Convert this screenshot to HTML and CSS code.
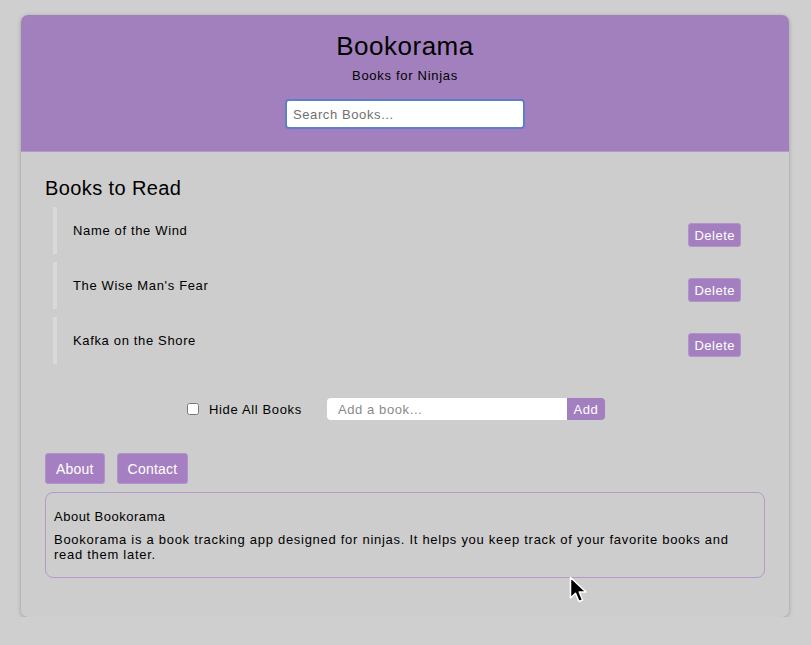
FILE: index.html
```html
<!DOCTYPE html>
<html lang="en">
<head>
<meta charset="utf-8">
<title>Bookorama</title>
<link rel="stylesheet" href="styles.css">
</head>
<body>
<div class="app">
  <header class="header">
    <h1 class="title">Bookorama</h1>
    <p class="tagline">Books for Ninjas</p>
    <input class="search" type="text" placeholder="Search Books...">
  </header>
  <main class="main">
    <h2 class="section-title">Books to Read</h2>
    <ul class="book-list">
      <li class="book"><span class="book-name">Name of the Wind</span><button class="delete">Delete</button></li>
      <li class="book"><span class="book-name">The Wise Man's Fear</span><button class="delete">Delete</button></li>
      <li class="book"><span class="book-name">Kafka on the Shore</span><button class="delete">Delete</button></li>
    </ul>
    <div class="controls">
      <input class="hide-check" type="checkbox" id="hide">
      <label class="hide-label" for="hide">Hide All Books</label>
      <input class="add-input" type="text" placeholder="Add a book...">
      <button class="add-btn">Add</button>
    </div>
    <nav class="tabs">
      <button class="tab">About</button>
      <button class="tab">Contact</button>
    </nav>
    <section class="about">
      <h3 class="about-title">About Bookorama</h3>
      <p class="about-text">Bookorama is a book tracking app designed for ninjas. It helps you keep track of your favorite books and read them later.</p>
    </section>
  </main>
</div>
<svg class="cursor" width="20" height="30" viewBox="0 0 20 30">
  <path d="M1.5 1.5 L1.5 22 L6.5 17.2 L10 25.5 L13.6 24 L10.2 16 L17 16 Z" fill="#000" stroke="#fff" stroke-width="1.5" stroke-linejoin="round"/>
</svg>
</body>
</html>
```

FILE: styles.css
```css
body {
  margin: 0;
  background: #cfcfcf;
  font-family: "Liberation Sans", Arial, sans-serif;
  color: #000;
}

.app {
  width: 768px;
  margin: 15px 0 0 21px;
  background: #cdcdcd;
  border-radius: 7px;
  box-shadow: 0 1px 4px rgba(0, 0, 0, 0.25);
  overflow: hidden;
  padding-bottom: 39px;
}

.header {
  background: #a280bd;
  text-align: center;
  padding: 16px 0 22px;
  border-bottom: 1px solid #b596cf;
}

.title {
  margin: 0;
  font-size: 26px;
  line-height: 30px;
  font-weight: normal;
  letter-spacing: 0.5px;
}

.tagline {
  margin: 7px 0 15px;
  font-size: 13px;
  line-height: 16px;
  letter-spacing: 0.7px;
}

.search {
  display: block;
  margin: 0 auto;
  width: 240px;
  height: 30px;
  box-sizing: border-box;
  border: 2px solid #5b7fc8;
  border-radius: 4px;
  padding: 0 6px;
  font-family: inherit;
  font-size: 13px;
  letter-spacing: 0.6px;
  background: #fff;
  outline: none;
}

.search::placeholder { color: #707070; }

.main {
  padding: 24px 24px 0;
}

.section-title {
  margin: 0 0 7px;
  font-size: 20px;
  line-height: 24px;
  font-weight: normal;
  letter-spacing: 0.4px;
}

.book-list {
  list-style: none;
  margin: 0 0 0 8px;
  padding: 0;
  display: flex;
  flex-direction: column;
  gap: 8px;
}

.book {
  display: flex;
  justify-content: space-between;
  align-items: flex-start;
  border-left: 4px solid #d9d9d9;
  padding: 16px 24px 7px 16px;
}

.book-name {
  font-size: 13px;
  line-height: 15px;
  letter-spacing: 0.65px;
}

.delete {
  height: 24px;
  padding: 0 5px;
  border: 1px solid #b293cc;
  border-radius: 3px;
  background: #a37fc0;
  color: #fff;
  font-family: inherit;
  font-size: 13px;
  letter-spacing: 0.5px;
}

.controls {
  margin-top: 34px;
  display: flex;
  align-items: center;
  height: 22px;
  padding-left: 142px;
}

.hide-check {
  margin: 0;
  width: 12px;
  height: 12px;
}

.hide-label {
  margin-left: 10px;
  font-size: 13px;
  letter-spacing: 0.65px;
}

.add-input {
  margin-left: 25px;
  width: 240px;
  height: 22px;
  box-sizing: border-box;
  border: none;
  border-radius: 4px 0 0 4px;
  padding: 0 11px;
  background: #fff;
  font-family: inherit;
  font-size: 13px;
  letter-spacing: 0.6px;
  outline: none;
}

.add-input::placeholder { color: #8a8a8a; }

.add-btn {
  width: 38px;
  height: 22px;
  border: none;
  border-radius: 0 4px 4px 0;
  background: #a37fc0;
  color: #fff;
  font-family: inherit;
  font-size: 13px;
  letter-spacing: 0.5px;
  padding: 0;
}

.tabs {
  margin-top: 33px;
  display: flex;
  gap: 12px;
}

.tab {
  height: 31px;
  padding: 0 10px;
  border: 1px solid #b293cc;
  border-radius: 3px;
  background: #a57fc1;
  color: #fff;
  font-family: inherit;
  font-size: 14px;
  letter-spacing: 0.2px;
}

.about {
  margin-top: 8px;
  border: 1px solid #b39ac9;
  border-radius: 8px;
  padding: 16px 8px 15px;
}

.about-title {
  margin: 0 0 8px;
  font-size: 13px;
  line-height: 15px;
  font-weight: normal;
  letter-spacing: 0.5px;
}

.about-text {
  margin: 0;
  font-size: 13px;
  line-height: 15px;
  letter-spacing: 0.72px;
}

.cursor {
  position: absolute;
  left: 569px;
  top: 576px;
}
```
